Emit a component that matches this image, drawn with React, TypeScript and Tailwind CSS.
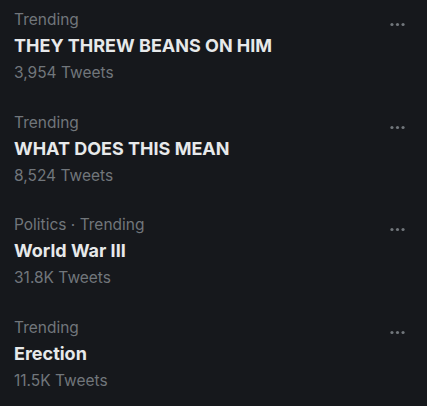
const trends = [
  { label: "Trending", title: "THEY THREW BEANS ON HIM", count: "3,954 Tweets" },
  { label: "Trending", title: "WHAT DOES THIS MEAN", count: "8,524 Tweets" },
  { label: "Politics · Trending", title: "World War III", count: "31.8K Tweets" },
  { label: "Trending", title: "Erection", count: "11.5K Tweets" },
];

const MoreIcon = () => (
  <svg width="19" height="19" viewBox="0 0 24 24" fill="currentColor">
    <circle cx="5" cy="12" r="2" />
    <circle cx="12" cy="12" r="2" />
    <circle cx="19" cy="12" r="2" />
  </svg>
);

const TrendRow = ({ label, title, count }: { label: string; title: string; count: string }) => (
  <div className="relative h-[102.5px] pl-[14px] pt-[10px]">
    <div className="text-[15.5px] leading-5 text-[#71767b]">{label}</div>
    <div className="mt-1 text-[18px] font-bold leading-6 text-[#e7e9ea]">{title}</div>
    <div className="mt-[5px] text-[15.5px] leading-5 text-[#71767b]">{count}</div>
    <div className="absolute right-[20px] top-[15px] text-[#71767b]">
      <MoreIcon />
    </div>
  </div>
);

export default function App() {
  return (
    <div className="h-[406px] w-[427px] overflow-hidden bg-[#16181c] font-['Inter',sans-serif]">
      {trends.map((t) => (
        <TrendRow key={t.title} {...t} />
      ))}
    </div>
  );
}
